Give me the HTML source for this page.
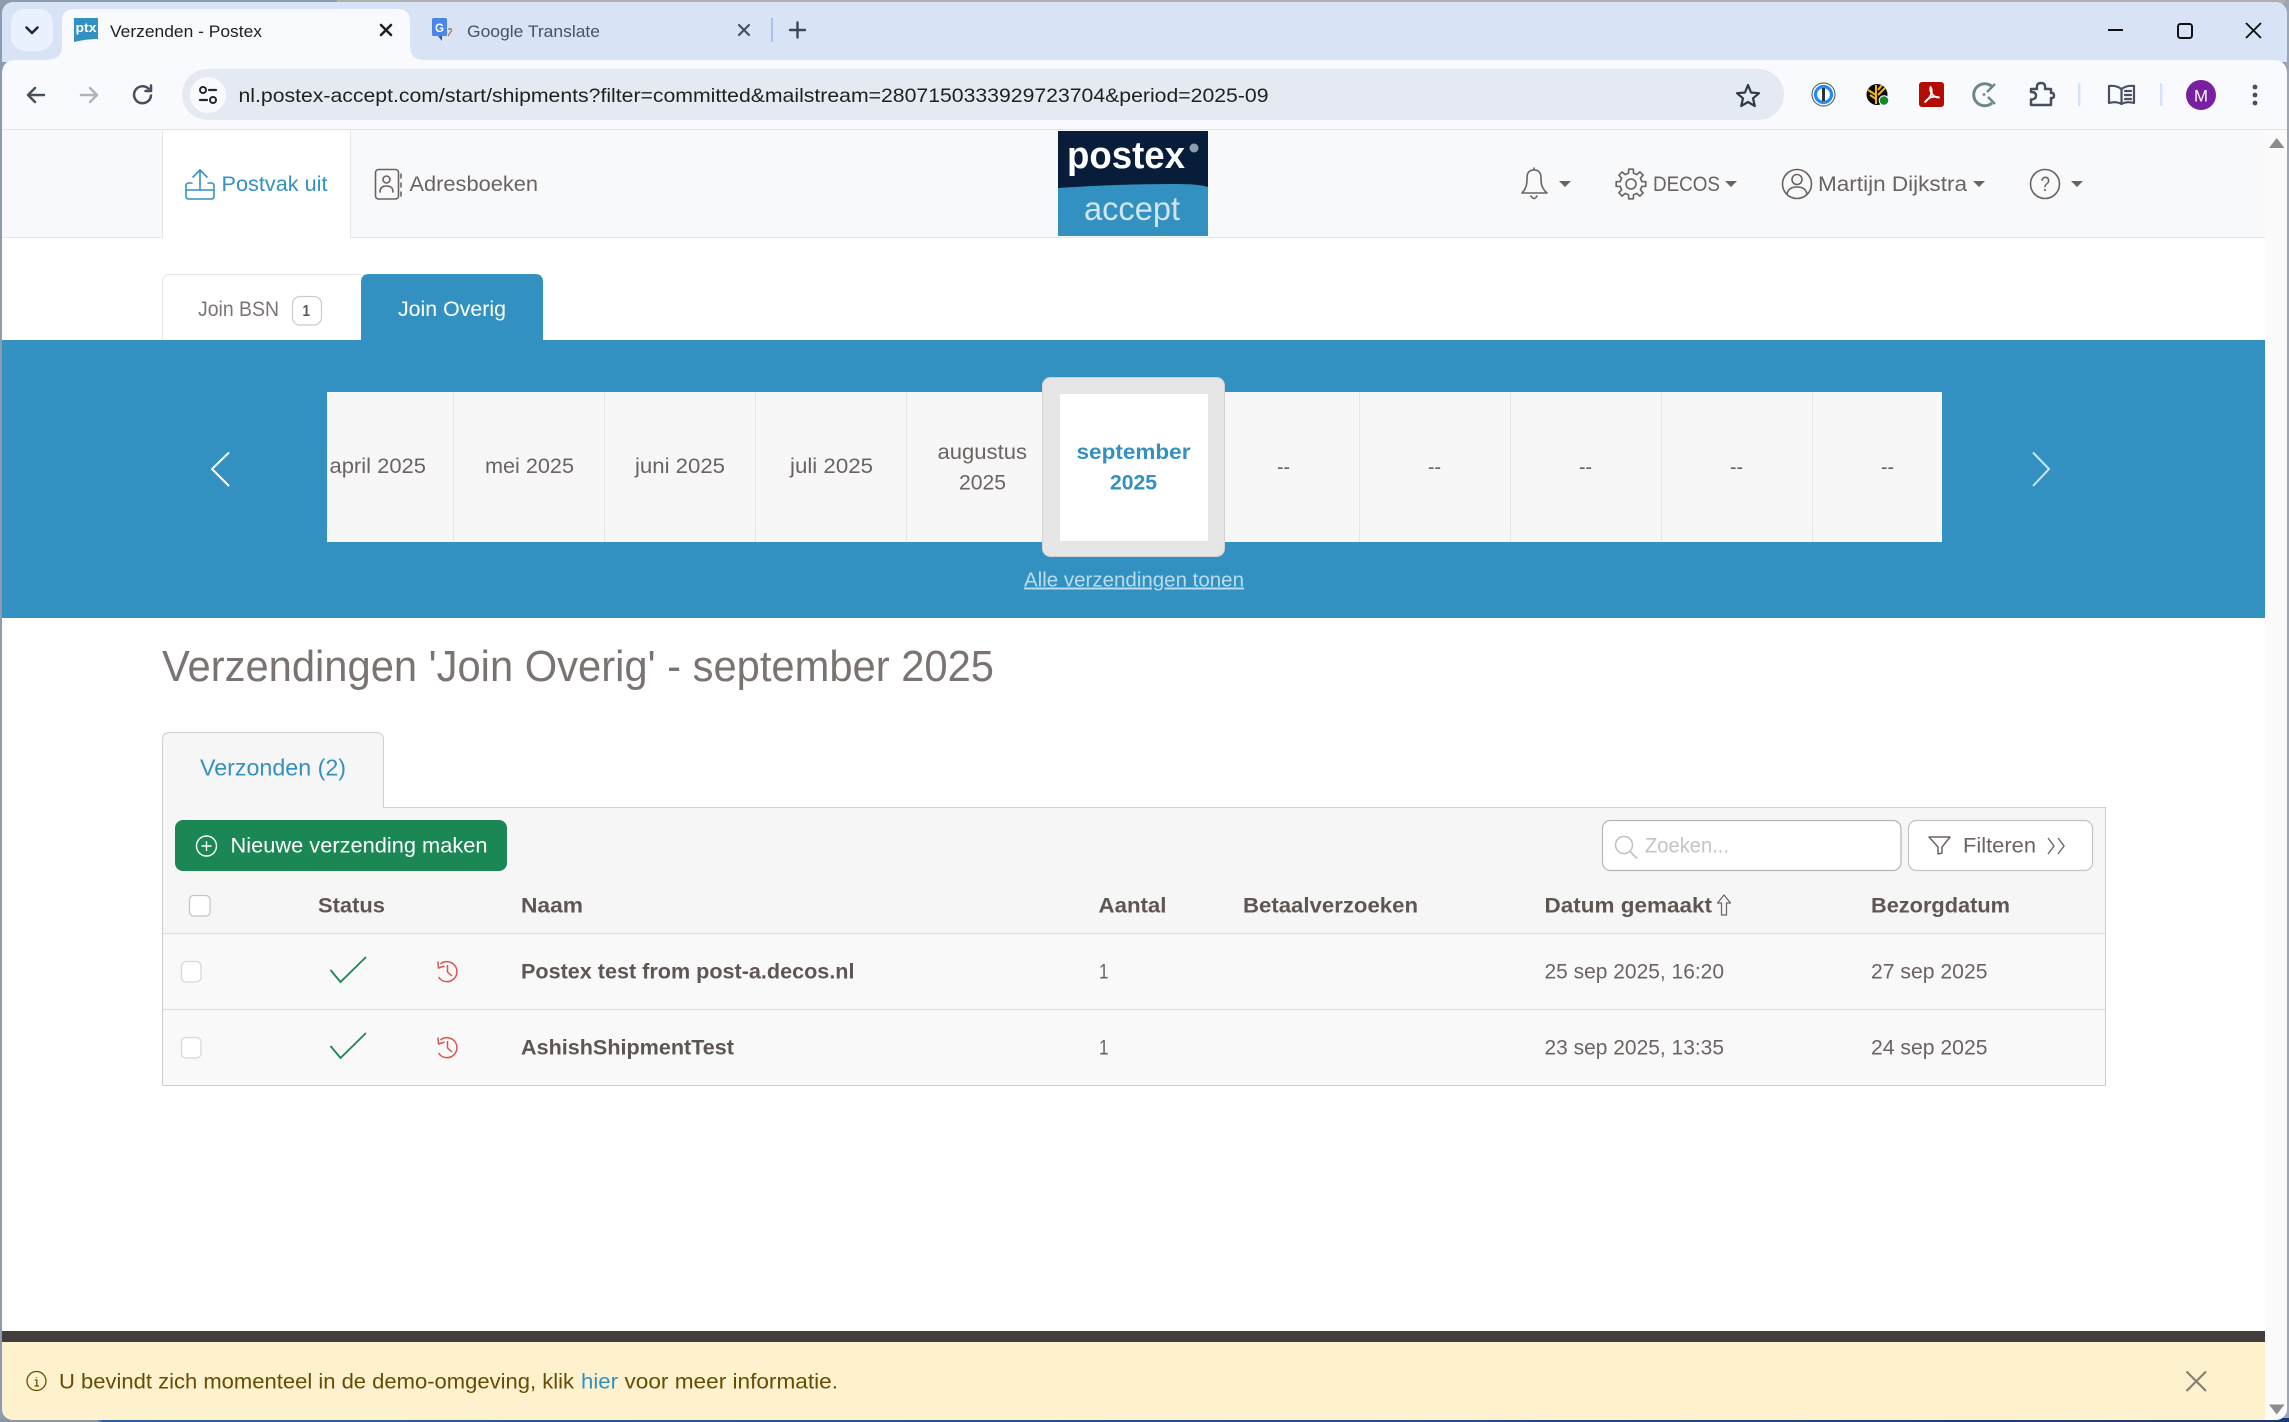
<!DOCTYPE html>
<html lang="nl"><head><meta charset="utf-8"><title>Verzenden - Postex</title>
<style>
html,body{margin:0;padding:0;width:2289px;height:1422px;overflow:hidden;background:#fff}
svg{display:block}
text{font-family:"Liberation Sans",sans-serif;fill:#6b6361;white-space:pre}
.b{font-weight:700;fill:#5f5654;font-size:21px}
.r{font-size:21px;fill:#6b6361}
.m{font-size:21.5px;fill:#6b6361;text-anchor:start}
.ic{fill:none;stroke:#6b6361;stroke-width:1.6;stroke-linecap:round;stroke-linejoin:round}
.tb{fill:none;stroke:#46505e;stroke-width:2.5;stroke-linecap:round;stroke-linejoin:round}
</style></head><body>
<svg width="2289" height="1422" viewBox="0 0 2289 1422" xmlns="http://www.w3.org/2000/svg">
<defs>
<clipPath id="win"><rect x="2" y="2" width="2285" height="1418" rx="11"/></clipPath>
<linearGradient id="bot" x1="0" x2="1" y1="0" y2="0"><stop offset="0" stop-color="#8b97a6"/><stop offset=".042" stop-color="#8b97a6"/><stop offset=".045" stop-color="#2b5f9a"/><stop offset=".5" stop-color="#24508a"/><stop offset="1" stop-color="#1c3a72"/></linearGradient>
</defs>
<rect width="2289" height="1422" fill="#8c9cae"/>
<rect x="337" y="0" width="1952" height="4" fill="#b3afb0"/>
<rect x="2285" y="0" width="4" height="1422" fill="#9aa6b5"/>
<rect x="0" y="1418" width="2289" height="4" fill="url(#bot)"/>
<g clip-path="url(#win)">
<!-- tab strip -->
<rect x="2" y="2" width="2285" height="60" fill="#d8e4f6"/>
<rect x="11" y="9" width="42" height="42" rx="14" fill="#eaf1fe"/>
<path d="M26.5 27.5 L32 33 L37.5 27.5" fill="none" stroke="#1f2937" stroke-width="2.6" stroke-linecap="round" stroke-linejoin="round"/>
<path d="M46 60 Q62 60 62 46 V21 Q62 9 74 9 H398 Q410 9 410 21 V46 Q410 60 424 60 Z" fill="#f9fafe"/>
<path d="M74 18 H98 V39 Q86 39 74 42 Z" fill="#3391c1"/>
<text x="75.5" y="32" font-size="12.5" font-weight="700" style="fill:#fff" textLength="21" lengthAdjust="spacingAndGlyphs">ptx</text>
<text x="110" y="37" font-size="16.5" style="fill:#1f1f1f" textLength="152" lengthAdjust="spacingAndGlyphs">Verzenden - Postex</text>
<path d="M381 25 L391 35 M391 25 L381 35" stroke="#1f1f1f" stroke-width="2.5" stroke-linecap="round"/>
<rect x="441" y="23" width="13" height="17" rx="1" fill="#dfe3e6"/>
<rect x="432" y="18" width="15" height="18" rx="1.5" fill="#4a86e8"/>
<path d="M438 36 L442 41 V36 Z" fill="#2a56c6"/>
<text x="435" y="32" font-size="12" font-weight="700" style="fill:#fff" textLength="9" lengthAdjust="spacingAndGlyphs">G</text>
<path d="M448 29 h4 M450 28 v2 M448 36 L452 30" stroke="#80868b" stroke-width="1.2" fill="none"/>
<text x="467" y="37" font-size="16.5" style="fill:#49535f" textLength="133" lengthAdjust="spacingAndGlyphs">Google Translate</text>
<path d="M739 25 L749 35 M749 25 L739 35" stroke="#46505e" stroke-width="2.2" stroke-linecap="round"/>
<rect x="771" y="18" width="2" height="24" fill="#a5c4f1"/>
<path d="M797.5 22.5 V37.5 M790 30 H805" stroke="#3c4654" stroke-width="2.4" stroke-linecap="round"/>
<!-- window controls -->
<rect x="2108" y="29" width="15" height="2" fill="#111"/>
<rect x="2178" y="24" width="14" height="14" rx="2.5" fill="none" stroke="#111" stroke-width="2"/>
<path d="M2246 23 L2261 38 M2261 23 L2246 38" stroke="#111" stroke-width="1.9"/>
<!-- toolbar -->
<path d="M2 130 V74 Q2 60 16 60 H2273 Q2287 60 2287 74 V130 Z" fill="#f9fafe"/>
<rect x="2" y="129" width="2285" height="1" fill="#dfe3ea"/>
<path d="M44 95 H28 M35 88 L28 95 L35 102" class="tb"/>
<path d="M81 95 H97 M90 88 L97 95 L90 102" class="tb" style="stroke:#b0b4ba"/>
<path d="M151 95.5 A8.5 8.5 0 1 1 148.500 88.7 M151 85.5 V91 H145.500" class="tb"/>
<rect x="182" y="69" width="1602" height="51" rx="25.5" fill="#e5eaf2"/>
<circle cx="208" cy="95" r="18" fill="#f9fafe"/>
<circle cx="203" cy="90" r="3" fill="none" stroke="#1f2937" stroke-width="2"/>
<path d="M209 90 H216 M200 100 H207" stroke="#1f2937" stroke-width="2.2" stroke-linecap="round"/>
<circle cx="213" cy="100" r="3" fill="none" stroke="#1f2937" stroke-width="2"/>
<text x="238.5" y="102" font-size="19.5" style="fill:#1f1f1f" textLength="1030" lengthAdjust="spacingAndGlyphs">nl.postex-accept.com/start/shipments?filter=committed&amp;mailstream=2807150333929723704&amp;period=2025-09</text>
<path d="M1748 85 L1751 92.5 L1759 93.2 L1753 98.3 L1754.8 106 L1748 102 L1741.2 106 L1743 98.3 L1737 93.2 L1745 92.5 Z" fill="none" stroke="#2f3a48" stroke-width="2.2" stroke-linejoin="round"/>
<!-- extensions -->
<circle cx="1823.5" cy="94.5" r="11.5" fill="#fff" stroke="#666" stroke-width="1.2"/>
<circle cx="1823.5" cy="94.5" r="8" fill="#fff" stroke="#1a8cff" stroke-width="3.2"/>
<rect x="1822" y="88" width="3" height="13" fill="#333"/>
<circle cx="1877" cy="94.5" r="10.5" fill="#0c0c0c"/>
<path d="M1876 85 V104 M1876 95 L1868 90 M1876 99 L1870 95 M1878 95 L1885 88 M1878 90 L1882 85" stroke="#f5b60d" stroke-width="2" fill="none"/>
<circle cx="1884" cy="100.5" r="4.8" fill="#128a2c" stroke="#fff" stroke-width="1"/>
<rect x="1919" y="82" width="25" height="25" rx="3" fill="#b30b00"/>
<path d="M1925 102 C1930 98 1934 92 1930.5 87 C1929 92 1934 98 1939 97.5 C1934 95.5 1928 97.5 1925 102 Z" fill="none" stroke="#fff" stroke-width="1.8" stroke-linejoin="round"/>
<path d="M1992 86.5 A11 11 0 1 0 1992 103" fill="none" stroke="#6d858c" stroke-width="3"/>
<path d="M1995 84 L1987 92 M1988 97 L1995 104" stroke="#6d858c" stroke-width="2.4"/>
<circle cx="1984" cy="94.5" r="1.4" fill="#6d858c"/>
<path d="M2031 89 H2037 Q2036 83 2041 83 Q2046 83 2045 89 H2051 V93 Q2054 92.5 2054 95.5 Q2054 98.5 2051 98 V105 H2031 V99.5 Q2036 99.5 2036 95.5 Q2036 92 2031 92 Z" class="tb"/>
<rect x="2078" y="83" width="2.4" height="23" rx="1" fill="#d3e3fd"/>
<path d="M2121.5 89 Q2116 85 2109 86 V103 Q2116 101 2121.5 104 Q2127 101 2134 103 V86 Q2127 85 2121.5 89 V104 M2125 91 H2131 M2125 95 H2131 M2125 99 H2131" class="tb" style="stroke-width:2.2"/>
<rect x="2160" y="83" width="2.4" height="23" rx="1" fill="#d3e3fd"/>
<circle cx="2201" cy="95" r="15" fill="#7b1fa2"/>
<text x="2194" y="101.5" font-size="17" style="fill:#fff" textLength="14" lengthAdjust="spacingAndGlyphs">M</text>
<circle cx="2255" cy="87" r="2.4" fill="#46505e"/><circle cx="2255" cy="95" r="2.4" fill="#46505e"/><circle cx="2255" cy="103" r="2.4" fill="#46505e"/>
<!-- page -->
<rect x="2" y="130" width="2285" height="1290" fill="#fff"/>
<rect x="2265" y="130" width="22" height="1290" fill="#fbfbfb"/>
<path d="M2276.7 138 L2284.5 148 H2269 Z" fill="#8d8d8d"/>
<path d="M2276.7 1414.5 L2284.5 1404.5 H2269 Z" fill="#8d8d8d"/>
<!-- navbar -->
<rect x="2" y="130" width="2263" height="107" fill="#f8f9fb"/>
<rect x="2" y="237" width="2263" height="1" fill="#e6e6e6"/>
<rect x="162" y="131" width="189" height="107" fill="#fff"/>
<path d="M162.500 131 V238 M350.500 131 V238" stroke="#e6e6e6" stroke-width="1"/>
<g class="ic" style="stroke:#3391c1">
<path d="M200 170 V189 M193 177 L200 170 L207 177" />
<path d="M192 183 H189 Q186 183 186 186 V196 Q186 199 189 199 H211 Q214 199 214 196 V186 Q214 183 211 183 H208 M186 190 H214" />
</g>
<text x="221.500" y="191" font-size="21" style="fill:#3391c1" textLength="106" lengthAdjust="spacingAndGlyphs">Postvak uit</text>
<g class="ic">
<rect x="375.500" y="169.500" width="23" height="29.500" rx="3"/>
<circle cx="386.500" cy="179.500" r="3.500"/>
<path d="M380 192 Q380 186 386.500 186 Q393 186 393 192 M401 174 V178 M401 183 V187 M401 192 V196"/>
</g>
<text x="409.500" y="191" class="r" textLength="128.500" lengthAdjust="spacingAndGlyphs">Adresboeken</text>
<!-- logo -->
<rect x="1058" y="131" width="150" height="105" fill="#071d3a"/>
<path d="M1058 188 C1090 186 1130 184 1170 184 C1190 184 1200 184.500 1208 187 V236 H1058 Z" fill="#3391c1"/>
<text x="1067" y="168" font-size="38" font-weight="700" style="fill:#fff" textLength="118" lengthAdjust="spacingAndGlyphs">postex</text>
<circle cx="1194" cy="148" r="4.500" fill="#8f9cae"/>
<text x="1084" y="220" font-size="33" style="fill:#cfe6f2" textLength="96" lengthAdjust="spacingAndGlyphs">accept</text>
<!-- right nav -->
<g class="ic">
<path d="M1522 193 Q1527 188 1527 180 V178 Q1527 170 1534 170 Q1541 170 1541 178 V180 Q1541 188 1547 193 Z M1534 170 V168 M1531 196 Q1534 201 1537 196"/>
<g transform="translate(1631 184)">
<polyline points="10.160,-4.210 10.720,-2.470 14.820,-2.350 14.820,2.350 10.720,2.470 10.160,4.210"/>
<polyline transform="rotate(45)" points="10.160,-4.210 10.720,-2.470 14.820,-2.350 14.820,2.350 10.720,2.470 10.160,4.210"/>
<polyline transform="rotate(90)" points="10.160,-4.210 10.720,-2.470 14.820,-2.350 14.820,2.350 10.720,2.470 10.160,4.210"/>
<polyline transform="rotate(135)" points="10.160,-4.210 10.720,-2.470 14.820,-2.350 14.820,2.350 10.720,2.470 10.160,4.210"/>
<polyline transform="rotate(180)" points="10.160,-4.210 10.720,-2.470 14.820,-2.350 14.820,2.350 10.720,2.470 10.160,4.210"/>
<polyline transform="rotate(225)" points="10.160,-4.210 10.720,-2.470 14.820,-2.350 14.820,2.350 10.720,2.470 10.160,4.210"/>
<polyline transform="rotate(270)" points="10.160,-4.210 10.720,-2.470 14.820,-2.350 14.820,2.350 10.720,2.470 10.160,4.210"/>
<polyline transform="rotate(315)" points="10.160,-4.210 10.720,-2.470 14.820,-2.350 14.820,2.350 10.720,2.470 10.160,4.210"/>
<circle r="5"/>
</g>
<circle cx="1797" cy="184" r="14.500"/>
<circle cx="1797" cy="179.500" r="5"/>
<path d="M1787 194.500 Q1788 187 1797 187 Q1806 187 1807 194.500"/>
<circle cx="2045" cy="184" r="14.500"/>
</g>
<text x="2040.500" y="191" class="r" textLength="9.500" lengthAdjust="spacingAndGlyphs">?</text>
<path d="M1559 181 H1571 L1565 187 Z M1725 181 H1737 L1731 187 Z M1973 181 H1985 L1979 187 Z M2071 181 H2083 L2077 187 Z" fill="#6b6361"/>
<text x="1653" y="191" class="r" textLength="67" lengthAdjust="spacingAndGlyphs">DECOS</text>
<text x="1818" y="191" class="r" textLength="149" lengthAdjust="spacingAndGlyphs">Martijn Dijkstra</text>
<!-- top tabs -->
<path d="M162.500 340 V282 Q162.500 274.500 170 274.500 H361" fill="#fff" stroke="#e6e6e6"/>
<path d="M361 340 V282 Q361 274 369 274 H535 Q543 274 543 282 V340 Z" fill="#3391c1"/>
<text x="198" y="316" font-size="21" style="fill:#7d7573" textLength="81" lengthAdjust="spacingAndGlyphs">Join BSN</text>
<rect x="292.500" y="296.500" width="29" height="28.500" rx="7.500" fill="#fff" stroke="#ccc" stroke-width="1.200"/>
<text x="302.500" y="316" class="b" style="font-size:15.500px" textLength="7.500" lengthAdjust="spacingAndGlyphs">1</text>
<text x="398" y="316" font-size="21" style="fill:#fff" textLength="108" lengthAdjust="spacingAndGlyphs">Join Overig</text>
<!-- blue band -->
<rect x="2" y="340" width="2263" height="278" fill="#3391c1"/>
<path d="M229 452.500 L212 469 L229 486" fill="none" stroke="#fff" stroke-width="2"/>
<path d="M2033 452.500 L2049 469 L2033 486" fill="none" stroke="#cfe6f2" stroke-width="2"/>
<rect x="327" y="392" width="1615" height="150" fill="#f7f7f7"/>
<path d="M453.500 392 V542 M604.500 392 V542 M755.500 392 V542 M906.500 392 V542 M1359.500 392 V542 M1510.500 392 V542 M1661.500 392 V542 M1812.500 392 V542" stroke="#e6e6e6"/>
<rect x="1042.500" y="377.500" width="182" height="179" rx="8" fill="#e6e6e6" stroke="#d2d2d2"/>
<rect x="1059.500" y="393.500" width="149" height="148" fill="#fff" stroke="#e4e4e4"/>
<text x="329.500" y="473" class="m" textLength="96.500" lengthAdjust="spacingAndGlyphs">april 2025</text>
<text x="485" y="473" class="m" textLength="89" lengthAdjust="spacingAndGlyphs">mei 2025</text>
<text x="635" y="473" class="m" textLength="90" lengthAdjust="spacingAndGlyphs">juni 2025</text>
<text x="790" y="473" class="m" textLength="83" lengthAdjust="spacingAndGlyphs">juli 2025</text>
<text x="937.500" y="459" class="m" textLength="89.500" lengthAdjust="spacingAndGlyphs">augustus</text>
<text x="959" y="489.500" class="m" textLength="47" lengthAdjust="spacingAndGlyphs">2025</text>
<text x="1076.500" y="459" class="m" font-weight="700" style="fill:#3391c1" textLength="114" lengthAdjust="spacingAndGlyphs">september</text>
<text x="1110" y="489.500" class="m" font-weight="700" style="fill:#3391c1" textLength="47" lengthAdjust="spacingAndGlyphs">2025</text>
<text x="1277" y="474" class="m" textLength="13" lengthAdjust="spacingAndGlyphs">--</text>
<text x="1428" y="474" class="m" textLength="13" lengthAdjust="spacingAndGlyphs">--</text>
<text x="1579" y="474" class="m" textLength="13" lengthAdjust="spacingAndGlyphs">--</text>
<text x="1730" y="474" class="m" textLength="13" lengthAdjust="spacingAndGlyphs">--</text>
<text x="1881" y="474" class="m" textLength="13" lengthAdjust="spacingAndGlyphs">--</text>
<text x="1024" y="586.500" font-size="20" style="fill:#b9dcee;text-decoration:underline" textLength="220" lengthAdjust="spacingAndGlyphs">Alle verzendingen tonen</text>
<!-- heading -->
<text x="162" y="681" font-size="44" style="fill:#7a7371" textLength="832" lengthAdjust="spacingAndGlyphs">Verzendingen 'Join Overig' - september 2025</text>
<!-- panel -->
<rect x="162.500" y="807.500" width="1943" height="278" fill="#f6f6f6" stroke="#cfcfcf"/>
<rect x="163" y="934" width="1942" height="151" fill="#f9f9f9"/>
<path d="M162.500 808 V740 Q162.500 732.500 170 732.500 H376 Q383.500 732.500 383.500 740 V808" fill="#f6f6f6" stroke="#cfcfcf"/>
<rect x="163" y="804" width="220" height="6" fill="#f6f6f6"/>
<text x="200" y="775.500" font-size="23" style="fill:#3391c1" textLength="146" lengthAdjust="spacingAndGlyphs">Verzonden (2)</text>
<rect x="175" y="820" width="332" height="51" rx="8" fill="#1a8754"/>
<circle cx="206.500" cy="846" r="10" fill="none" stroke="#fff" stroke-width="1.400"/>
<path d="M206.500 841 V851 M201.500 846 H211.500" stroke="#fff" stroke-width="1.400"/>
<text x="230.500" y="852.500" font-size="21" style="fill:#fff" textLength="257" lengthAdjust="spacingAndGlyphs">Nieuwe verzending maken</text>
<rect x="1602.500" y="820.500" width="298.500" height="50" rx="8" fill="#fff" stroke="#b5b5b5" stroke-width="1.200"/>
<circle cx="1624" cy="845" r="8.500" fill="none" stroke="#c4c0c0" stroke-width="1.600"/>
<path d="M1630 851.500 L1637 858.500" stroke="#c4c0c0" stroke-width="1.600"/>
<text x="1645" y="852.500" font-size="21" style="fill:#c8c3c3" textLength="84" lengthAdjust="spacingAndGlyphs">Zoeken...</text>
<rect x="1908.500" y="820.500" width="184" height="50" rx="8" fill="#fff" stroke="#c4c4c4" stroke-width="1.200"/>
<path d="M1929 837 H1950 L1942 847 V853 L1938 854 V847 Z" fill="none" stroke="#6b6361" stroke-width="1.500" stroke-linejoin="round"/>
<text x="1963" y="852.500" class="r" textLength="73" lengthAdjust="spacingAndGlyphs">Filteren</text>
<path d="M2048 838 L2054 846 L2048 854 M2058 838 L2064 846 L2058 854" fill="none" stroke="#6b6361" stroke-width="1.400"/>
<rect x="189.500" y="895.500" width="20.500" height="20.500" rx="4" fill="#fff" stroke="#c4c4c4" stroke-width="1.200"/>
<text x="318" y="912.500" class="b" textLength="67" lengthAdjust="spacingAndGlyphs">Status</text>
<text x="521" y="912.500" class="b" textLength="62" lengthAdjust="spacingAndGlyphs">Naam</text>
<text x="1098.500" y="912.500" class="b" textLength="68" lengthAdjust="spacingAndGlyphs">Aantal</text>
<text x="1243" y="912.500" class="b" textLength="175" lengthAdjust="spacingAndGlyphs">Betaalverzoeken</text>
<text x="1544.500" y="912.500" class="b" textLength="167.500" lengthAdjust="spacingAndGlyphs">Datum gemaakt</text>
<path d="M1724 895 L1717.500 903 H1721.500 V915 H1726.500 V903 H1730.500 Z" fill="none" stroke="#6b6361" stroke-width="1.200" stroke-linejoin="round"/>
<text x="1871" y="912.500" class="b" textLength="139" lengthAdjust="spacingAndGlyphs">Bezorgdatum</text>
<path d="M163 933.500 H2105 M163 1009.500 H2105" stroke="#dedede" stroke-width="1.200"/>
<!-- row 1 -->
<rect x="181.500" y="961.500" width="19.500" height="20.500" rx="4.500" fill="#fff" stroke="#d6d6d6" stroke-width="1.200"/>
<path d="M330.500 970 L340.500 982 L366 957" fill="none" stroke="#1a8754" stroke-width="1.800"/>
<path d="M440.500 964 A10 10 0 1 1 438.500 977 M438 961.500 L438.500 968 L444.500 966 M447.500 965 V972 L452 976" fill="none" stroke="#d9534f" stroke-width="1.500" stroke-linejoin="round"/>
<text x="521" y="978.500" class="b" textLength="333.500" lengthAdjust="spacingAndGlyphs">Postex test from post-a.decos.nl</text>
<text x="1099" y="978.500" class="r" textLength="9.500" lengthAdjust="spacingAndGlyphs">1</text>
<text x="1544.500" y="978.500" class="r" textLength="179.500" lengthAdjust="spacingAndGlyphs">25 sep 2025, 16:20</text>
<text x="1871" y="978.500" class="r" textLength="116.500" lengthAdjust="spacingAndGlyphs">27 sep 2025</text>
<!-- row 2 -->
<rect x="181.500" y="1037.500" width="19.500" height="20.500" rx="4.500" fill="#fff" stroke="#d6d6d6" stroke-width="1.200"/>
<path d="M330.500 1046 L340.500 1058 L366 1033" fill="none" stroke="#1a8754" stroke-width="1.800"/>
<path d="M440.500 1040 A10 10 0 1 1 438.500 1053 M438 1037.500 L438.500 1044 L444.500 1042 M447.500 1041 V1048 L452 1052" fill="none" stroke="#d9534f" stroke-width="1.500" stroke-linejoin="round"/>
<text x="521" y="1054.500" class="b" textLength="213" lengthAdjust="spacingAndGlyphs">AshishShipmentTest</text>
<text x="1099" y="1054.500" class="r" textLength="9.500" lengthAdjust="spacingAndGlyphs">1</text>
<text x="1544.500" y="1054.500" class="r" textLength="179.500" lengthAdjust="spacingAndGlyphs">23 sep 2025, 13:35</text>
<text x="1871" y="1054.500" class="r" textLength="116.500" lengthAdjust="spacingAndGlyphs">24 sep 2025</text>
<!-- footer -->
<rect x="2" y="1331" width="2263" height="11" fill="#433d3d"/>
<rect x="2" y="1342" width="2263" height="78" fill="#fef1ce"/>
<circle cx="36.500" cy="1381" r="9.500" fill="none" stroke="#664d03" stroke-width="1.300"/>
<path d="M36.500 1377 V1377.800 M34.800 1380 H36.800 V1386 M34.500 1386 H39" fill="none" stroke="#664d03" stroke-width="1.300"/>
<text x="59" y="1388.500" font-size="21" style="fill:#664d03" textLength="515" lengthAdjust="spacingAndGlyphs">U bevindt zich momenteel in de demo-omgeving, klik</text>
<text x="581" y="1388.500" font-size="21" style="fill:#3391c1" textLength="37" lengthAdjust="spacingAndGlyphs">hier</text>
<text x="624.500" y="1388.500" font-size="21" style="fill:#664d03" textLength="213.500" lengthAdjust="spacingAndGlyphs">voor meer informatie.</text>
<path d="M2186.500 1371.500 L2206 1391 M2206 1371.500 L2186.500 1391" stroke="#85806f" stroke-width="2.200"/>
</g>
</svg>
</body></html>
